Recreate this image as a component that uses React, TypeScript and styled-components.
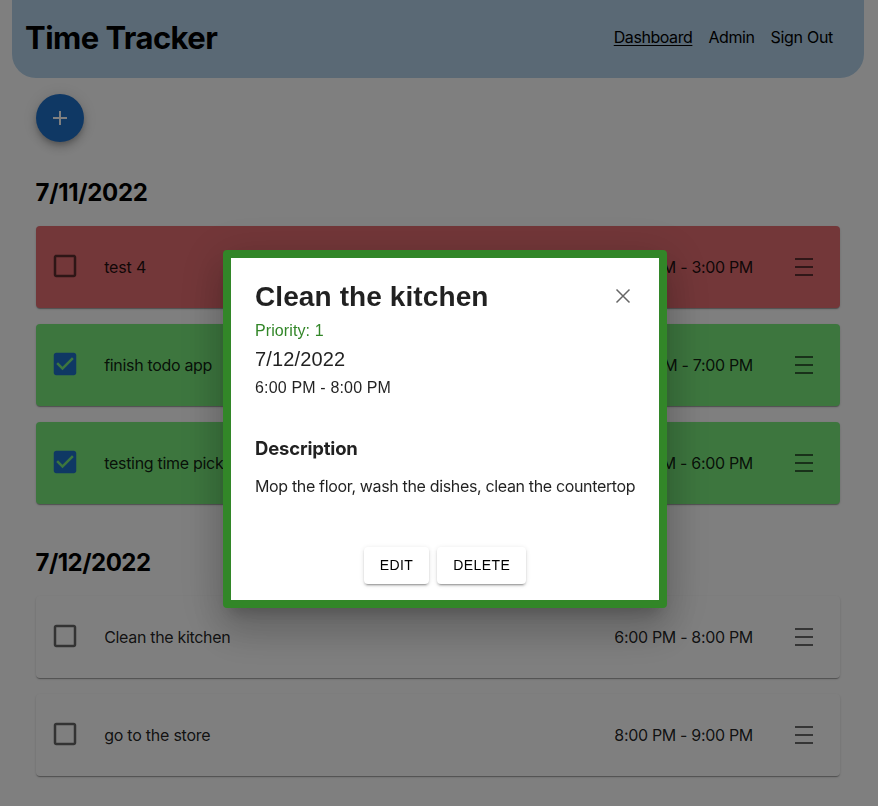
import React from "react";
import styled, { createGlobalStyle, css } from "styled-components";

const ui = `Inter, "Noto Sans", sans-serif`;
const dialogFont = `"Liberation Sans", Arial, sans-serif`;

const GlobalStyle = createGlobalStyle`
  *, *::before, *::after { box-sizing: border-box; }
  html, body { margin: 0; background: #fff; }
  body { font-family: ${ui}; font-size: 16px; overflow: hidden; }
  h1, h2, h3, p { margin: 0; }
  button { font: inherit; border: 0; padding: 0; background: none; cursor: pointer; }
`;

const Page = styled.div`
  height: 806px;
  padding: 0 14px 0 12px;
`;

const Header = styled.header`
  display: flex;
  align-items: center;
  justify-content: space-between;
  height: 78px;
  padding: 0 31px 3px 13px;
  background: #b4d3eb;
  border-radius: 0 0 24px 24px;
`;

const Brand = styled.h1`
  font-size: 31px;
  line-height: 38px;
  font-weight: 700;
  letter-spacing: -0.55px;
`;

const Nav = styled.nav`
  display: flex;
  gap: 16px;
  padding-bottom: 2px;
`;

const NavLink = styled.a<{ $active?: boolean; $tracking: number }>`
  color: #000;
  line-height: 20px;
  letter-spacing: ${(p) => p.$tracking}px;
  text-decoration: ${(p) => (p.$active ? "underline" : "none")};
  text-decoration-skip-ink: none;
  text-underline-offset: 2px;
  text-decoration-thickness: 1px;
`;

const Main = styled.main`
  padding: 16px 24px 0;
`;

const AddButton = styled.button`
  display: grid;
  place-items: center;
  width: 48px;
  height: 48px;
  margin-bottom: 37px;
  border-radius: 50%;
  background: #1f70c9;
  color: #fff;
  box-shadow: 0 3px 5px -1px rgba(0, 0, 0, 0.2), 0 6px 10px rgba(0, 0, 0, 0.14),
    0 1px 18px rgba(0, 0, 0, 0.12);
`;

const Day = styled.section`
  display: flex;
  flex-direction: column;
  gap: 16px;
  margin-bottom: 45px;
`;

const DayTitle = styled.h2<{ $tracking: number }>`
  font-size: 24px;
  line-height: 28px;
  font-weight: 700;
  letter-spacing: ${(p) => p.$tracking}px;
  margin: 0 0 3px -0.5px;
`;

type Tone = "late" | "done" | "open";
const tones: Record<Tone, string> = { late: "#e66e72", done: "#7aec7d", open: "#fff" };

const Task = styled.article<{ $tone: Tone }>`
  display: flex;
  align-items: center;
  height: 82px;
  padding: 0 27px 0 14px;
  border-radius: 4px;
  background: ${(p) => tones[p.$tone]};
  box-shadow: 0 2px 1px -1px rgba(0, 0, 0, 0.2), 0 1px 1px rgba(0, 0, 0, 0.14),
    0 1px 3px rgba(0, 0, 0, 0.12);
  color: rgba(0, 0, 0, 0.87);
`;

const CheckIcon = styled.svg<{ $checked: boolean }>`
  width: 30px;
  height: 30px;
  margin: 0 24.2px 2px 0;
  fill: ${(p) => (p.$checked ? "#1f70c9" : "rgba(0, 0, 0, 0.6)")};
`;

const TaskName = styled.span<{ $tracking: number }>`
  flex: 1;
  line-height: 20px;
  letter-spacing: ${(p) => p.$tracking}px;
`;

const TaskTime = styled.span`
  line-height: 20px;
  letter-spacing: -0.32px;
`;

const Handle = styled.div`
  display: flex;
  flex-direction: column;
  gap: 6px;
  width: 18px;
  margin-left: 42px;
`;

const HandleBar = styled.i`
  height: 2px;
  background: rgba(0, 0, 0, 0.58);
`;

const Backdrop = styled.div`
  position: fixed;
  inset: 0;
  display: flex;
  align-items: center;
  justify-content: center;
  padding: 52px 0 0 12px;
  background: rgba(0, 0, 0, 0.5);
`;

const Dialog = styled.div`
  display: flex;
  flex-direction: column;
  width: 444px;
  height: 358px;
  padding: 22px 24px 16px;
  border: 8px solid #328628;
  border-radius: 4px;
  background: #fff;
  color: rgba(0, 0, 0, 0.87);
  font-family: ${dialogFont};
  box-shadow: 0 11px 15px -7px rgba(0, 0, 0, 0.2), 0 24px 38px 3px rgba(0, 0, 0, 0.14),
    0 9px 46px 8px rgba(0, 0, 0, 0.12);
`;

const DialogHead = styled.div`
  display: flex;
  align-items: center;
  justify-content: space-between;
  height: 32px;
`;

const DialogTitle = styled.h2`
  padding-top: 2px;
  font-size: 28px;
  line-height: 32px;
  font-weight: 700;
  letter-spacing: 0.1px;
`;

const CloseButton = styled.button`
  display: flex;
  color: rgba(0, 0, 0, 0.6);
`;

const dialogLine = css`
  line-height: 20px;
  white-space: nowrap;
`;

const Priority = styled.p`
  ${dialogLine}
  margin-top: 9px;
  color: #328628;
  letter-spacing: 0.1px;
`;

const DialogDate = styled.p`
  ${dialogLine}
  margin-top: 8px;
  font-size: 20px;
  letter-spacing: 0.13px;
`;

const DialogTime = styled.p`
  ${dialogLine}
  margin-top: 9px;
  letter-spacing: 0.16px;
`;

const DescriptionTitle = styled.h3`
  margin-top: 39px;
  font-family: ${ui};
  font-size: 18.5px;
  line-height: 22px;
  font-weight: 700;
  letter-spacing: -0.18px;
`;

const Description = styled.p`
  ${dialogLine}
  margin-top: 17px;
  font-family: ${ui};
  letter-spacing: -0.345px;
`;

const Actions = styled.div`
  display: flex;
  justify-content: center;
  gap: 8px;
  margin-top: auto;
`;

const ActionButton = styled.button`
  height: 37px;
  padding: 0 16px 2px;
  border-radius: 4px;
  background: #fff;
  color: #000;
  font-family: ${dialogFont};
  font-size: 14px;
  letter-spacing: 0.4px;
  box-shadow: 0 3px 1px -2px rgba(0, 0, 0, 0.2), 0 2px 2px rgba(0, 0, 0, 0.14),
    0 1px 5px rgba(0, 0, 0, 0.12);
`;

const BOX =
  "M19 5v14H5V5h14m0-2H5c-1.1 0-2 .9-2 2v14c0 1.1.9 2 2 2h14c1.1 0 2-.9 2-2V5c0-1.1-.9-2-2-2z";
const BOX_CHECKED =
  "M19 3H5c-1.11 0-2 .9-2 2v14c0 1.1.89 2 2 2h14c1.11 0 2-.9 2-2V5c0-1.1-.89-2-2-2zm-9 14l-5-5 1.41-1.41L10 14.17l7.59-7.59L19 8l-9 9z";

interface TaskData {
  name: string;
  time: string;
  tone: Tone;
  tracking: number;
}

const days: { date: string; tracking: number; tasks: TaskData[] }[] = [
  {
    date: "7/11/2022",
    tracking: -0.3,
    tasks: [
      { name: "test 4", time: "2:00 PM - 3:00 PM", tone: "late", tracking: -0.15 },
      { name: "finish todo app", time: "6:00 PM - 7:00 PM", tone: "done", tracking: -0.32 },
      { name: "testing time picker", time: "5:00 PM - 6:00 PM", tone: "done", tracking: -0.3 },
    ],
  },
  {
    date: "7/12/2022",
    tracking: -0.5,
    tasks: [
      { name: "Clean the kitchen", time: "6:00 PM - 8:00 PM", tone: "open", tracking: -0.32 },
      { name: "go to the store", time: "8:00 PM - 9:00 PM", tone: "open", tracking: -0.24 },
    ],
  },
];

function TaskRow({ task }: { task: TaskData }) {
  const checked = task.tone === "done";
  return (
    <Task $tone={task.tone}>
      <CheckIcon $checked={checked} viewBox="0 0 24 24">
        <path d={checked ? BOX_CHECKED : BOX} />
      </CheckIcon>
      <TaskName $tracking={task.tracking}>{task.name}</TaskName>
      <TaskTime>{task.time}</TaskTime>
      <Handle>
        <HandleBar />
        <HandleBar />
        <HandleBar />
      </Handle>
    </Task>
  );
}

export default function App() {
  return (
    <>
      <GlobalStyle />
      <Page>
        <Header>
          <Brand>Time Tracker</Brand>
          <Nav>
            <NavLink $active $tracking={-0.43}>Dashboard</NavLink>
            <NavLink $tracking={-0.4}>Admin</NavLink>
            <NavLink $tracking={-0.3}>Sign Out</NavLink>
          </Nav>
        </Header>
        <Main>
          <AddButton aria-label="Add task">
            <svg width="24" height="24" viewBox="0 0 24 24" fill="currentColor">
              <path d="M19 13h-6v6h-2v-6H5v-2h6V5h2v6h6v2z" />
            </svg>
          </AddButton>
          {days.map((day) => (
            <Day key={day.date}>
              <DayTitle $tracking={day.tracking}>{day.date}</DayTitle>
              {day.tasks.map((task) => (
                <TaskRow key={task.name} task={task} />
              ))}
            </Day>
          ))}
        </Main>
      </Page>
      <Backdrop>
        <Dialog role="dialog">
          <DialogHead>
            <DialogTitle>Clean the kitchen</DialogTitle>
            <CloseButton aria-label="Close">
              <svg width="24" height="24" viewBox="0 0 24 24" fill="none" stroke="currentColor" strokeWidth="1.5">
                <path d="M5.5 5.5l13 13M18.5 5.5l-13 13" />
              </svg>
            </CloseButton>
          </DialogHead>
          <Priority>Priority: 1</Priority>
          <DialogDate>7/12/2022</DialogDate>
          <DialogTime>6:00 PM - 8:00 PM</DialogTime>
          <DescriptionTitle>Description</DescriptionTitle>
          <Description>Mop the floor, wash the dishes, clean the countertop</Description>
          <Actions>
            <ActionButton>EDIT</ActionButton>
            <ActionButton>DELETE</ActionButton>
          </Actions>
        </Dialog>
      </Backdrop>
    </>
  );
}
